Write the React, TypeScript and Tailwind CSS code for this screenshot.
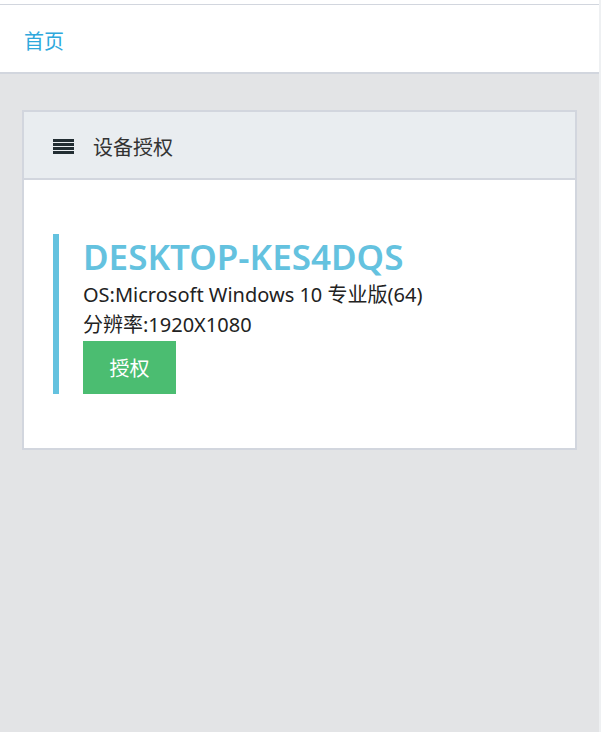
import React from "react";

const font = { fontFamily: '"Noto Sans", "Noto Sans CJK SC", sans-serif' };

const App: React.FC = () => {
  return (
    <div className="min-h-[732px] bg-[#e3e4e6] border-r-2 border-[#eef0f2]" style={font}>
      <div className="h-[5px] bg-white border-b border-[#d2d6de]" />
      <header className="h-[69px] bg-white border-b-2 border-[#d2d6de] flex items-center pl-6 pt-[6px]">
        <a href="#" className="text-[20px] text-[#2ea8dc]">
          首页
        </a>
      </header>
      <div className="pt-9 pl-[22px] pr-[22px]">
        <div className="bg-white border-2 border-[#d2d6de]">
          <div className="h-[68px] bg-[#e9edf0] border-b-2 border-[#d2d6de] flex items-center pl-[29px] gap-[19px] pt-[3px]">
            <svg width="21" height="15" viewBox="0 0 21 15">
              <rect x="0" y="0" width="21" height="3" fill="#222d32" />
              <rect x="0" y="4" width="21" height="3" fill="#222d32" />
              <rect x="0" y="8" width="21" height="3" fill="#222d32" />
              <rect x="0" y="12" width="21" height="3" fill="#222d32" />
            </svg>
            <span className="text-[20px] text-[#333] mt-[2px]">设备授权</span>
          </div>
          <div className="pt-[54px] pb-[54px] pl-[29px]">
            <div className="border-l-[6px] border-[#64c2df] pl-6">
              <div className="text-[35px] font-semibold text-[#64c2df] leading-[46px]">
                DESKTOP-KES4DQS
              </div>
              <div className="text-[20px] text-[#222] leading-[30px]">
                OS:Microsoft Windows 10 专业版(64)
              </div>
              <div className="text-[20px] text-[#222] leading-[30px]">分辨率:1920X1080</div>
              <button className="mt-px w-[93px] h-[53px] bg-[#4bbd71] text-white text-[20px] pt-[3px]">
                授权
              </button>
            </div>
          </div>
        </div>
      </div>
    </div>
  );
};

export default App;
